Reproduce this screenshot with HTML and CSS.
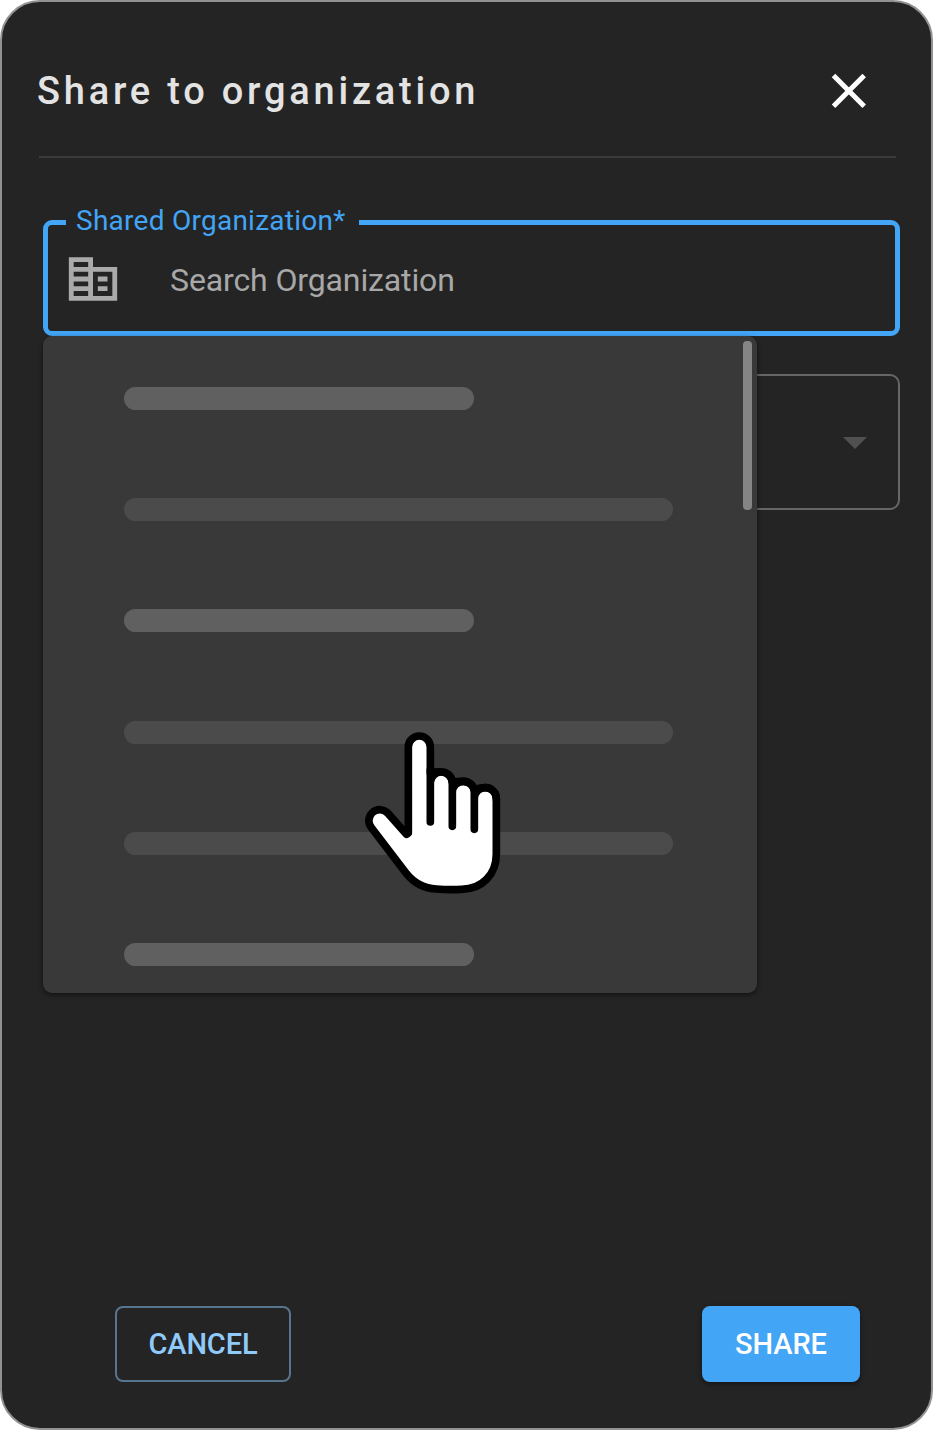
FILE: index.html
```html
<!DOCTYPE html>
<html lang="en">
<head>
<meta charset="utf-8">
<title>Share to organization</title>
<link rel="stylesheet" href="styles.css">
</head>
<body>
<main class="dialog">
  <header class="header">
    <h1 class="title">Share to organization</h1>
    <button class="close" aria-label="Close">
      <svg width="36" height="36" viewBox="0 0 36 36"><path d="M2.5 2.5 33.2 33.2M33.2 2.5 2.5 33.2" stroke="#fff" stroke-width="5" fill="none"/></svg>
    </button>
  </header>
  <section class="form">
    <div class="combo">
      <fieldset class="field">
        <legend class="label">Shared Organization*</legend>
        <div class="input">
          <svg class="building" width="58" height="58" viewBox="0 0 24 24"><path fill="#aaa" d="M12 7V3H2v18h20V7H12zM10 19H4v-2h6v2zm0-4H4v-2h6v2zm0-4H4V9h6v2zm0-4H4V5h6v2zm10 12h-8V9h8v10zm-2-8h-4v2h4v-2zm0 4h-4v2h4v-2z"/></svg>
          <span class="placeholder">Search Organization</span>
        </div>
      </fieldset>
      <div class="menu">
        <span class="bar short"></span>
        <span class="bar"></span>
        <span class="bar short"></span>
        <span class="bar"></span>
        <span class="bar"></span>
        <span class="bar short"></span>
        <span class="thumb"></span>
        <svg class="hand" width="170" height="190" viewBox="0 0 510 570">
          <g stroke="#000" stroke-width="23" stroke-linecap="round" stroke-linejoin="round">
            <path fill="#fff" d="M170 343 175 339V81A33 33 0 0 1 241 81V158Q256 155 274 156A33 33 0 0 1 307 187Q322 184 340 184A33 33 0 0 1 373 211Q388 203 406 203A33 33 0 0 1 439 236V402C439 463 396 508 335 508C310 509 285 509 260 507C222 506 192 490 167 458L65 324A32.5 32.5 0 0 1 114 280Z"/>
            <path fill="none" d="M241 150V306M241 189A33 33 0 0 1 307 189V319M307 217A33 33 0 0 1 373 217V328M373 236A33 33 0 0 1 439 236"/>
          </g>
        </svg>
      </div>
    </div>
    <div class="select">
      <svg width="24" height="12" viewBox="0 0 24 12"><path fill="#505050" d="M0 0H24L12 12Z"/></svg>
    </div>
  </section>
  <footer class="actions">
    <button class="btn cancel">CANCEL</button>
    <button class="btn share">SHARE</button>
  </footer>
</main>
</body>
</html>
```
FILE: styles.css
```css
* { box-sizing: border-box; }
body { margin: 0; background: #fff; font-family: Roboto, sans-serif; }
button { font-family: inherit; padding: 0; }
svg { display: block; flex: none; }

.dialog {
  width: 933px;
  height: 1430px;
  display: flex;
  flex-direction: column;
  background: #242424;
  border: 2px solid #929292;
  border-radius: 40px;
}
.header {
  height: 156px;
  margin: 0 35px 0 37px;
  padding: 24px 29px 0 0;
  display: flex;
  align-items: center;
  justify-content: space-between;
  border-bottom: 2px solid #3a3a3a;
}
.title {
  margin: 0 0 0 -2px;
  color: #e3e3e3;
  font-size: 38px;
  font-weight: 500;
  letter-spacing: 3.78px;
  line-height: 46px;
}
.close { border: 0; background: none; }

.form { padding: 48px 31px 0 41px; }
.combo { position: relative; }
.field {
  height: 130px;
  margin: 0;
  padding: 0;
  border: 5px solid #42a5f5;
  border-radius: 9px;
}
.label {
  margin-left: 18px;
  padding: 0 13.5px 4px 10px;
  color: #42a5f5;
  font-size: 28px;
  line-height: 29px;
  letter-spacing: .26px;
}
.input {
  height: 80px;
  padding-left: 16px;
  display: flex;
  align-items: center;
  gap: 48px;
}
.placeholder {
  padding-top: 2px;
  color: #a8a8a8;
  font-size: 32px;
  letter-spacing: -.12px;
}

.menu {
  position: absolute;
  z-index: 1;
  top: 130px;
  left: 0;
  width: 714px;
  height: 657.4px;
  padding: 51px 81px 0;
  display: flex;
  flex-direction: column;
  gap: 88.2px;
  background: #393939;
  border-radius: 9px;
  box-shadow: 0 2px 5px rgba(0, 0, 0, .5);
}
.bar {
  width: 549px;
  height: 23px;
  flex: none;
  border-radius: 12px;
  background: #4b4b4b;
}
.bar.short { width: 350px; background: #606060; }
.thumb {
  position: absolute;
  top: 5px;
  right: 5px;
  width: 9px;
  height: 169px;
  border-radius: 4px;
  background: #858585;
}
.hand { position: absolute; left: 307px; top: 384px; }

.select {
  height: 136px;
  margin-top: 38px;
  padding: 2px 31px 0 0;
  display: flex;
  align-items: center;
  justify-content: flex-end;
  border: 2px solid #666;
  border-radius: 10px;
}

.actions {
  margin-top: auto;
  padding: 0 71px 46px 113px;
  display: flex;
  justify-content: space-between;
}
.btn {
  height: 76px;
  border-radius: 8px;
  font-size: 29px;
  font-weight: 500;
  letter-spacing: -.1px;
}
.cancel { width: 176px; border: 2px solid #587590; background: none; color: #90caf9; }
.share {
  width: 158px;
  border: 0;
  background: #42a5f5;
  color: #fff;
  box-shadow: 0 2px 5px rgba(0, 0, 0, .45);
}
```
